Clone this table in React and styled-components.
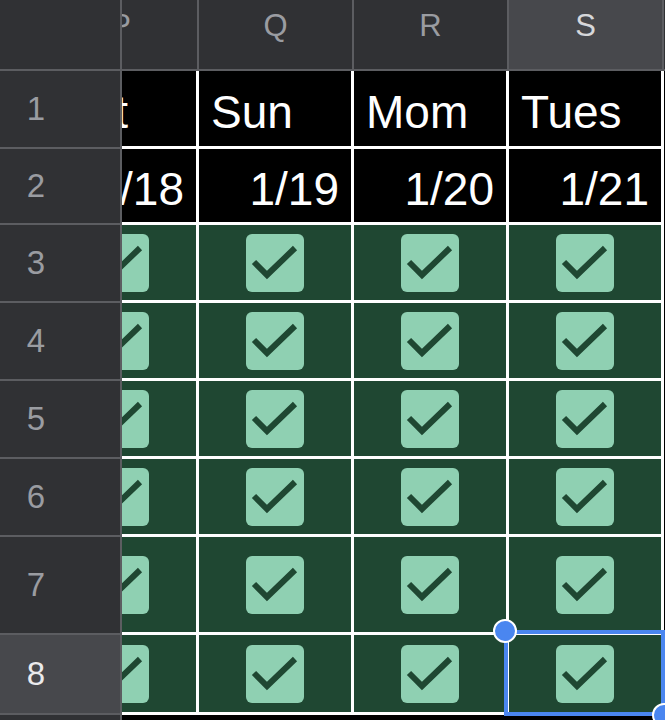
import React from "react";
import styled, { createGlobalStyle } from "styled-components";

const GlobalStyle = createGlobalStyle`
  html, body {
    margin: 0;
    padding: 0;
    background: #000;
    font-family: "Liberation Sans", Arial, sans-serif;
  }
`;

const ROW_HEIGHTS = [75, 73, 75, 75, 75, 75, 95, 77];
const COLUMNS = ["P", "Q", "R", "S"];
const DAYS = ["Sat", "Sun", "Mom", "Tues"];
const DATES = ["1/18", "1/19", "1/20", "1/21"];
const SELECTED = { row: 7, col: 3 };

const Sheet = styled.div`
  width: 100vw;
  height: 100vh;
  display: grid;
  grid-template-columns: 122px 1fr;
  grid-template-rows: 71px 1fr;
  background: #000;
  overflow: hidden;
`;

const Corner = styled.div`
  background: #303134;
  border-right: 2px solid #5c5d61;
  border-bottom: 2px solid #5c5d61;
`;

const ColHeaderStrip = styled.div`
  overflow: hidden;
  background: #303134;
  border-bottom: 2px solid #5c5d61;
`;

const ColHeaderTrack = styled.div`
  display: flex;
  height: 100%;
  margin-left: -78px;
`;

const ColHeader = styled.div`
  flex: 0 0 155px;
  box-sizing: border-box;
  border-right: 2px solid #5c5d61;
  background: ${(p) => (p.$active ? "#47484c" : "#303134")};
  color: ${(p) => (p.$active ? "#d6d7da" : "#9a9ca1")};
  display: flex;
  justify-content: center;
  align-items: flex-start;
  padding-top: 10px;
  font-size: 31px;
  line-height: 1;
`;

const RowHeaderStrip = styled.div`
  background: #303134;
  border-right: 2px solid #5c5d61;
  display: flex;
  flex-direction: column;
`;

const RowHeader = styled.div`
  flex: 0 0 ${(p) => p.$h + 3}px;
  box-sizing: border-box;
  border-bottom: 2px solid #5c5d61;
  background: ${(p) => (p.$active ? "#47484c" : "#303134")};
  color: ${(p) => (p.$active ? "#eaeaec" : "#9a9ca1")};
  display: flex;
  align-items: center;
  justify-content: center;
  padding-right: 48px;
  font-size: 33px;
`;

const CellViewport = styled.div`
  overflow: hidden;
  position: relative;
`;

const CellGrid = styled.div`
  display: grid;
  width: max-content;
  grid-template-columns: repeat(4, 152px);
  grid-template-rows: ${(p) => p.$rows.map((h) => `${h}px`).join(" ")};
  gap: 3px;
  padding: 0 3px 3px 0;
  margin-left: -78px;
  background: #fff;
`;

const TextCell = styled.div`
  background: #000;
  color: #fff;
  font-size: 46px;
  display: flex;
  align-items: center;
  justify-content: ${(p) => (p.$right ? "flex-end" : "flex-start")};
  padding: 7px 12px 0 ${(p) => (p.$lead ? 15 : 12)}px;
  white-space: nowrap;
  overflow: hidden;
`;

const CheckCell = styled.div`
  position: relative;
  background: #1f4732;
  display: flex;
  align-items: center;
  justify-content: center;
`;

const CheckBox = styled.div`
  width: 58px;
  height: 58px;
  border-radius: 6px;
  background: #8fd0b2;
  display: flex;
  align-items: center;
  justify-content: center;
`;

const Selection = styled.div`
  position: absolute;
  inset: -5px -4px -4px -5px;
  border: 4px solid #4a86f0;
  pointer-events: none;
`;

const Handle = styled.span`
  position: absolute;
  width: 20px;
  height: 20px;
  border-radius: 50%;
  background: #4a86f0;
  border: 2.5px solid #fff;
  ${(p) => (p.$end ? "right: -15px; bottom: -15px;" : "left: -15px; top: -15px;")}
`;

const CheckMark = () => (
  <svg width="58" height="58" viewBox="0 0 58 58">
    <polyline
      points="8,28 21,41 49,14"
      fill="none"
      stroke="#1f4732"
      strokeWidth="6"
      strokeLinejoin="miter"
    />
  </svg>
);

export default function App() {
  const checkRows = ROW_HEIGHTS.slice(2);

  return (
    <>
      <GlobalStyle />
      <Sheet>
        <Corner />
        <ColHeaderStrip>
          <ColHeaderTrack>
            {COLUMNS.map((c, i) => (
              <ColHeader key={c} $active={i === SELECTED.col}>
                {c}
              </ColHeader>
            ))}
          </ColHeaderTrack>
        </ColHeaderStrip>
        <RowHeaderStrip>
          {ROW_HEIGHTS.map((h, i) => (
            <RowHeader key={i} $h={h} $active={i === SELECTED.row}>
              {i + 1}
            </RowHeader>
          ))}
        </RowHeaderStrip>
        <CellViewport>
          <CellGrid $rows={ROW_HEIGHTS}>
            {DAYS.map((d, i) => (
              <TextCell key={d} $lead={i === 0}>
                {d}
              </TextCell>
            ))}
            {DATES.map((d) => (
              <TextCell key={d} $right>
                {d}
              </TextCell>
            ))}
            {checkRows.map((_, r) =>
              COLUMNS.map((c, ci) => {
                const selected = r + 2 === SELECTED.row && ci === SELECTED.col;
                return (
                  <CheckCell key={`${c}${r}`}>
                    <CheckBox>
                      <CheckMark />
                    </CheckBox>
                    {selected && (
                      <Selection>
                        <Handle />
                        <Handle $end />
                      </Selection>
                    )}
                  </CheckCell>
                );
              })
            )}
          </CellGrid>
        </CellViewport>
      </Sheet>
    </>
  );
}
